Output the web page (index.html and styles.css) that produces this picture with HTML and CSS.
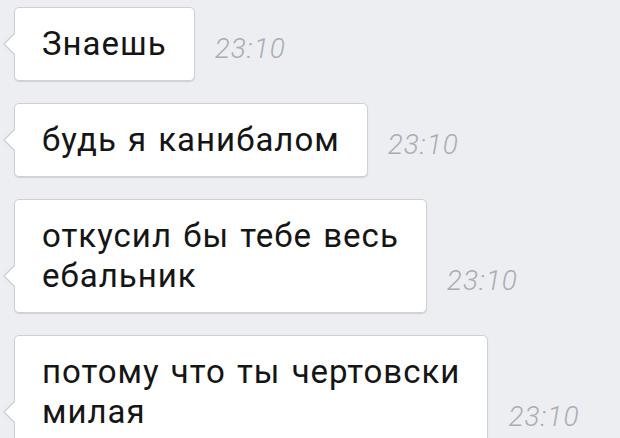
FILE: index.html
```html
<!DOCTYPE html>
<html lang="ru">
<head>
    <meta charset="UTF-8">
    <meta name="viewport" content="width=device-width, initial-scale=1.0">
    <title>Чат</title>
    <link rel="stylesheet" href="styles.css">
</head>
<body>
    <div class="chat">
        <div class="msg">
            <div class="bubble">Знаешь</div>
            <span class="time">23:10</span>
        </div>
        <div class="msg">
            <div class="bubble">будь я канибалом</div>
            <span class="time">23:10</span>
        </div>
        <div class="msg">
            <div class="bubble">откусил бы тебе весь<br>ебальник</div>
            <span class="time">23:10</span>
        </div>
        <div class="msg">
            <div class="bubble">потому что ты чертовски<br>милая</div>
            <span class="time">23:10</span>
        </div>
    </div>
</body>
</html>
```

FILE: styles.css
```css
html, body {
    height: 100%;
}

body {
    margin: 0;
    background-color: #eceef2;
    font-family: Roboto, 'Noto Sans', sans-serif;
    overflow: hidden;
}

.chat {
    display: flex;
    flex-direction: column;
    gap: 22px;
    padding: 7px 0 0 14px;
}

.msg {
    display: flex;
    align-items: flex-end;
    gap: 20px;
}

.bubble {
    position: relative;
    background: #fff;
    border: 1px solid #cdd0d5;
    border-radius: 5px;
    box-shadow: 0 1px 1px rgba(0, 0, 0, 0.12);
    padding: 16px 27px;
    font-size: 33px;
    line-height: 40px;
    letter-spacing: 1px;
    word-spacing: 2px;
    color: #151515;
    white-space: nowrap;
}

/* tail: grey outline + white fill */
.bubble::before,
.bubble::after {
    content: "";
    position: absolute;
    border-style: solid;
    border-color: transparent;
}

.bubble::before {
    left: -12px;
    bottom: 24px;
    border-width: 12px 12px 12px 0;
    border-right-color: #cdd0d5;
}

.bubble::after {
    left: -10px;
    bottom: 25px;
    border-width: 11px 11px 11px 0;
    border-right-color: #fff;
}

.time {
    margin-bottom: 19px;
    font-size: 28px;
    line-height: 27px;
    letter-spacing: 1px;
    font-weight: 300;
    font-style: italic;
    color: #a9adb3;
}
```
